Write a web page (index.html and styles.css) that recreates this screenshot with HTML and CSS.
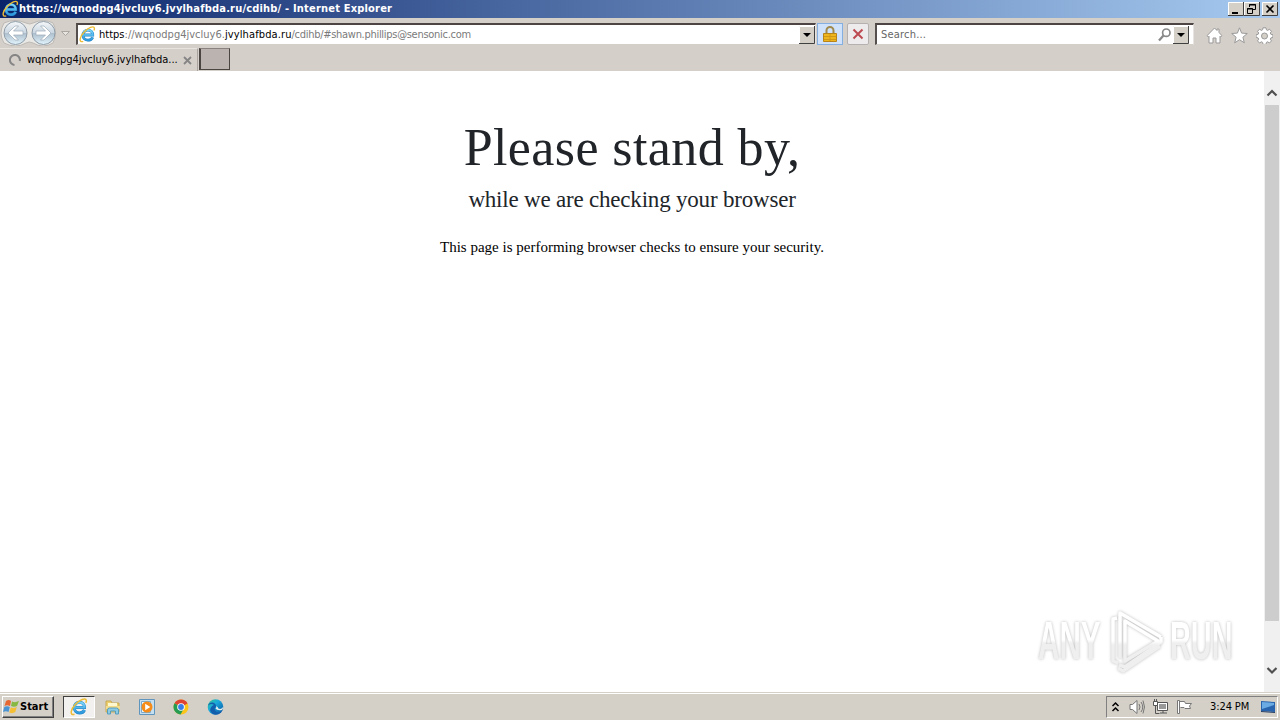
FILE: index.html
```html
<!DOCTYPE html>
<html lang="en">
<head>
<meta charset="utf-8">
<title>Internet Explorer</title>
<link rel="stylesheet" href="styles.css">
</head>
<body>
<svg class="defs" width="0" height="0">
  <defs>
    <linearGradient id="blue" x2="0" y2="1"><stop stop-color="#7bd6fa"/><stop offset="1" stop-color="#2c98dc"/></linearGradient>
    <linearGradient id="orb" x2="0" y2="1"><stop stop-color="#f5f8fa"/><stop offset=".48" stop-color="#cbd7e2"/><stop offset=".52" stop-color="#aebfce"/><stop offset="1" stop-color="#e2f4fc"/></linearGradient>
    <linearGradient id="edge" x2="1" y2="1"><stop stop-color="#38c987"/><stop offset=".4" stop-color="#1aa9dd"/><stop offset="1" stop-color="#0b4c9b"/></linearGradient>
    <linearGradient id="mark" gradientUnits="userSpaceOnUse" x1="0" y1="0" x2="0" y2="66"><stop stop-color="#fff"/><stop offset=".5" stop-color="#fff"/><stop offset=".56" stop-color="#efefef"/><stop offset="1" stop-color="#efefef"/></linearGradient>
    <symbol id="ie" viewBox="0 0 18 18">
      <path d="M14.500 12c-.9 1.900-2.700 3-5 3-3 0-5.200-2.200-5.200-5.300S6.500 4.300 9.500 4.300s5 2.200 5 5.200H5.500" fill="none" stroke="#2381c3" stroke-width="3"/>
      <path d="M14.500 12c-.9 1.900-2.700 3-5 3-3 0-5.200-2.200-5.200-5.300S6.500 4.300 9.500 4.300s5 2.200 5 5.200H5.500" fill="none" stroke="url(#blue)" stroke-width="2.200"/>
      <path d="M4.500 16.300C-.8 18 .8 11 5.500 6.300 9.500 2 15.500-.8 16.300 2.200c.2.800 0 1.600-.5 2.600" fill="none" stroke="#edbc36" stroke-width="1.500"/>
    </symbol>
  </defs>
</svg>
<header class="titlebar">
  <svg class="title-icon" width="17" height="18"><use href="#ie"/></svg>
  <span class="title-text">https://wqnodpg4jvcluy6.jvylhafbda.ru/cdihb/ - Internet Explorer</span>
  <div class="window-buttons">
    <svg width="16" height="14"><path class="face" d="M0 0h16v14H0z"/><path class="lit" d="M.5 13V.5H15"/><path class="dark" d="M0 13.500h15.500V0"/><path d="M4 10h6v2H4z"/></svg>
    <svg width="16" height="14"><path class="face" d="M0 0h16v14H0z"/><path class="lit" d="M.5 13V.5H15"/><path class="dark" d="M0 13.500h15.500V0"/><path d="M5.500 5V2.500h6v5H9M5 3h7M3.500 6.500h5v5h-5zM3 7h6" fill="none" stroke="#000"/></svg>
    <svg class="close" width="16" height="14"><path class="face" d="M0 0h16v14H0z"/><path class="lit" d="M.5 13V.5H15"/><path class="dark" d="M0 13.500h15.500V0"/><path d="M4.500 3.500l7 7M11.500 3.500l-7 7" stroke="#000" stroke-width="1.600"/></svg>
  </div>
</header>
<nav class="navbar">
  <svg class="travel" width="76" height="26" viewBox="0 0 76 26">
    <path d="M4 3Q15-2 26 3q4 2 7 0Q44-2 53 3q5 9 0 20-10 6-20 0-4-2-7 0-10 6-22 0-6-10 0-20z" fill="#eae8e5" stroke="#bdb9b5"/>
    <g fill="url(#orb)" stroke="#8f9da9"><circle cx="15.500" cy="13" r="11.500"/><circle cx="43.500" cy="13" r="11.500"/></g>
    <path d="M8 13l7-7h3.500l-5 5H23v4h-9.500l5 5H15z" fill="#fff" stroke="#9baab8" stroke-width=".7"/>
    <path d="M51 13l-7-7h-3.500l5 5H36v4h9.500l-5 5H44z" fill="#fff" stroke="#9baab8" stroke-width=".7"/>
    <path d="M61.500 11.500h8l-4 4z" fill="#e8e5e1" stroke="#aaa6a1"/>
  </svg>
  <div class="field address">
    <svg class="address-icon" width="17" height="17"><use href="#ie"/></svg>
    <span class="url"><b>https</b>://wqnodpg4jvcluy6.<b class="domain">jvylhafbda.ru</b><span class="path">/cdihb/#shawn.phillips@sensonic.com</span></span>
    <svg class="drop" width="16" height="18"><path class="face" d="M0 0h16v18H0z"/><path class="lit" d="M.5 17V.5H15"/><path class="dark" d="M0 17.500h15.500V0"/><path d="M4 7h8l-4 4z"/></svg>
  </div>
  <div class="lock"><svg width="14" height="17"><path d="M3.500 8V4.500a3.500 3.500 0 0 1 7 0V8" fill="none" stroke="#a08a4e" stroke-width="2"/><path d="M.5 7.500h13v8H.5z" fill="#efb51d" stroke="#b78419"/><path d="M1 10.500h12M1 13.500h12M7 8v7" stroke="#cf9817"/></svg></div>
  <div class="stop"><svg width="12" height="12"><path d="M1.500 1.500l9 9M10.500 1.500l-9 9" stroke="#bd4a50" stroke-width="2"/></svg></div>
  <div class="field search">
    <span class="placeholder">Search...</span>
    <svg class="lens" width="13" height="14"><circle cx="8.300" cy="4.700" r="3.700" fill="none" stroke="#888" stroke-width="1.700"/><path d="M5.500 7.500L1 12.500" stroke="#888" stroke-width="2.300"/></svg>
    <svg class="drop" width="16" height="18"><path class="face" d="M0 0h16v18H0z"/><path class="lit" d="M.5 17V.5H15"/><path class="dark" d="M0 17.500h15.500V0"/><path d="M4 7h8l-4 4z"/></svg>
  </div>
  <div class="tools">
    <svg width="17" height="17"><path d="M1 8.700L8.500 1l2.500 2.500V2h2v3.500L16 8.700l-1.300 1.200-.7-.7V16h-4v-5H7v5H3V9.200l-.7.700z" fill="#fff" stroke="#999"/></svg>
    <svg width="17" height="17"><path d="M8.500.8l2.100 5.300 5.700.4-4.400 3.700 1.400 5.600-4.800-3.100-4.800 3.100 1.400-5.600L.7 6.500l5.700-.4z" fill="#fff" stroke="#999"/></svg>
    <svg width="17" height="17"><path d="M7 .8h3l.4 2 1.300.6 1.700-1.200 2.100 2.100-1.200 1.700.6 1.300 2 .4v2.800l-2 .4-.6 1.300 1.200 1.700-2.100 2.100-1.700-1.200-1.300.6-.4 2H7l-.4-2-1.300-.6L3.600 16l-2.100-2.100 1.200-1.700-.6-1.300-2-.4V7.700l2-.4.600-1.300-1.200-1.700 2.100-2.100 1.700 1.200 1.300-.6z" fill="#fff" stroke="#999"/><circle cx="8.500" cy="9" r="3" fill="#d4d0c8" stroke="#999"/></svg>
  </div>
</nav>
<div class="tabs">
  <div class="tab">
    <svg width="14" height="14"><path d="M6.500 12A5 5 0 1 1 11.800 8" fill="none" stroke="#858585" stroke-width="2"/></svg>
    <span class="tab-text">wqnodpg4jvcluy6.jvylhafbda...</span>
    <svg class="tab-close" width="9" height="9"><path d="M1 1l7 7M8 1L1 8" stroke="#858585" stroke-width="1.800"/></svg>
  </div>
  <div class="new-tab"></div>
</div>
<div class="viewport">
  <main class="page">
    <h1>Please stand by,</h1>
    <h2>while we are checking your browser</h2>
    <p>This page is performing browser checks to ensure your security.</p>
  </main>
  <div class="scrollbar">
    <svg width="16" height="16"><path d="M3.500 10.500L8 6l4.500 4.500" fill="none" stroke="#505050" stroke-width="2.200"/></svg>
    <div class="thumb"></div>
    <svg class="down" width="16" height="16"><path d="M3.500 6L8 10.500l4.500-4.500" fill="none" stroke="#505050" stroke-width="2.200"/></svg>
  </div>
  <div class="watermark">
    <span class="any">ANY</span>
    <svg width="62" height="66" viewBox="0 0 62 66"><g fill="none" stroke="url(#mark)" stroke-width="3.500" stroke-linejoin="round"><path d="M15 50V5l41 24"/><path d="M12 10l-4 1v42l5 2"/><path d="M20 13l33 20-33 20z"/><path d="M56 29v5L20 59l-6-2"/><path d="M13 60l5 3 37-25"/></g></svg>
    <span class="run">RUN</span>
  </div>
</div>
<footer class="taskbar">
  <div class="start">
    <svg width="17" height="16"><path d="M3 2q3-2 5 0L7 7Q4 5.500 1.500 7z" fill="#e66731"/><path d="M9 2.500q3 1.500 7-.5l-2 5q-3 1.500-6 0z" fill="#86b843"/><path d="M1.300 8Q4 6.500 6.800 8L5.500 13Q3 11.500 0 13z" fill="#4a94d3"/><path d="M7.800 8.500q3 1 6-.5l-1.500 5q-3 2-6 .5z" fill="#f4bf35"/></svg>
    <span>Start</span>
  </div>
  <div class="task active"><svg width="18" height="18"><use href="#ie"/></svg></div>
  <div class="task"><svg width="16" height="16"><path d="M1 2h5l1 2h7v9H1z" fill="#edcf6b" stroke="#c6a957"/><path d="M3 4h9v3H3z" fill="#fff8cf"/><path d="M1 7h14v3H1z" fill="#f3dd8d"/><path d="M2.500 15v-4q0-2 2-2h7q2 0 2 2v4h-3v-3h-5v3z" fill="#8dcbe5" stroke="#559dbd"/></svg></div>
  <div class="task"><svg width="16" height="16"><path d="M.5.5h15v15H.5z" fill="#c6dff0" stroke="#6095be"/><path d="M2.500 2.500h9v11h-9z" fill="#eef6fa" stroke="#79a9cb"/><circle cx="8" cy="8" r="5.500" fill="#f58b18"/><path d="M6.200 4.800v6.400L11.300 8z" fill="#fff"/></svg></div>
  <div class="task"><svg width="16" height="16"><circle cx="8" cy="8" r="7.500" fill="#fbc51c"/><path d="M8 8L1.500 4.200A7.500 7.500 0 0 1 14.500 4.200z" fill="#df4334"/><path d="M8 8L1.500 4.200A7.500 7.500 0 0 0 7.500 15.500L11 9.500z" fill="#269b52"/><path d="M8 4.200h6.500L8 8z" fill="#df4334"/><circle cx="8" cy="8" r="3.800" fill="#fff"/><circle cx="8" cy="8" r="2.900" fill="#397ee8"/></svg></div>
  <div class="task"><svg width="17" height="16"><circle cx="8.500" cy="8" r="7.800" fill="url(#edge)"/><path d="M1 7C2 2 9 3 9 7c0 2-2 2-1 4 1 3 5 3 7 1-2 4-8 5-11 1C2 11 4 7 7 6 5 4 2 5 1 7z" fill="#125eac"/><path d="M9 7q1 1-.5 2.500Q10 12 15 11q1.500-2 1.300-3.500-1 3-4.300 2.300-1.500-.3-1-1.300Z" fill="#e3eeee"/></svg></div>
  <div class="tray">
    <svg width="9" height="12"><path d="M1.500 5l3-3 3 3M1.500 10l3-3 3 3" fill="none" stroke="#000" stroke-width="1.500"/></svg>
    <svg class="sound" width="16" height="16"><path d="M1 5.500h2.500L8 1.500v13l-4.500-4H1z" fill="#fff" stroke="#777"/><path d="M10 5q2 3 0 6M12 3q3.500 5 0 10M14 1.500q3 6.500 0 13" fill="none" stroke="#777"/></svg>
    <svg class="net" width="17" height="16"><path d="M5.500 3.500h10v8h-10z" fill="#fff" stroke="#555"/><path d="M7 5h7v5H7z" fill="#999"/><path d="M8 14h7M11 11v3M3.500 7v7.500h4" fill="none" stroke="#555"/><path d="M1.500 2.500h4v4h-4zM2.500 2V0M4.500 2V0" fill="#fff" stroke="#555"/></svg>
    <svg class="flag" width="17" height="16"><path d="M2.500 2.500h6l1 2h6l-2 2.500 1 2.500H9l-1-1H4.500" fill="#fff" stroke="#777"/><path d="M1.500 1.500h2v13h-2z" fill="#fff" stroke="#777"/></svg>
    <time>3:24 PM</time>
    <svg class="desktop" width="16" height="14"><path d="M1 1l14 1v10l-14-1z" fill="#2864ae"/><path d="M2 2l12 1v2L2 9z" fill="#6aabe4"/><path d="M1 11.500l14 1" stroke="#263d63"/></svg>
  </div>
</footer>
</body>
</html>
```
FILE: styles.css
```css
* { box-sizing: border-box; }
body { margin: 0; width: 1280px; height: 720px; overflow: hidden; display: flex; flex-direction: column; background: #d4d0c8; font: 11px/14px "DejaVu Sans Condensed", "DejaVu Sans", sans-serif; color: #000; }
svg { display: block; flex: none; }
.defs { position: absolute; }
.face { fill: #d4d0c8; }
.lit { stroke: #fff; fill: none; }
.dark { stroke: #404040; fill: none; }
.titlebar { height: 18px; flex: none; display: flex; align-items: center; padding: 0 2px; background: linear-gradient(90deg, #0a246a, #a6caf0); color: #fff; }
.title-text { font-weight: bold; white-space: nowrap; letter-spacing: .19px; }
.window-buttons { display: flex; margin-left: auto; }
.close { margin-left: 2px; }
.navbar { height: 30px; flex: none; display: flex; align-items: flex-start; padding-top: 4px; background: #d5cfca; border-top: 1px solid #d4d0c8; }
.travel { margin-top: -3px; }
.field { height: 22px; background: #fff; border-style: solid; border-width: 2px 1px 1px 2px; border-color: #4d4543 #e8e4e1 #d4d0c8 #55504e; display: flex; align-items: center; white-space: nowrap; }
.address { width: 740px; }
.address-icon { margin-left: 1px; }
.url { margin-left: 3px; color: #7a7a7a; letter-spacing: .01px; }
.url b { font-weight: normal; color: #000; }
.url .domain { letter-spacing: .11px; }
.path { letter-spacing: -.29px; }
.drop { margin-left: auto; }
.lock { width: 26px; height: 22px; margin-left: 1px; border: 1px solid #85afe0; background: #cfe2fa; display: grid; place-items: center; }
.stop { width: 22px; height: 22px; margin-left: 4px; border: 1px solid #b5b1b0; border-radius: 2px; background: #eeebec; display: grid; place-items: center; }
.search { width: 319px; margin-left: 6px; }
.placeholder { margin-left: 4px; color: #666; letter-spacing: .2px; }
.lens { margin-left: auto; }
.search .drop { margin: 0 4px 0 2px; }
.tools { display: flex; gap: 8px; margin: 4px 0 0 12px; }
.tabs { height: 23px; flex: none; display: flex; background: #d5cfca; }
.tab { width: 198px; display: flex; align-items: center; padding-left: 8px; border-top: 1px solid #e7e3df; border-right: 1px solid #aaa39f; }
.tab-text { width: 152px; margin-left: 5px; white-space: nowrap; letter-spacing: -.02px; }
.tab-close { margin-left: 4px; }
.new-tab { width: 31px; height: 22px; margin-left: 1px; border: 1px solid #4b4542; border-left-width: 2px; border-top-color: #8a827e; background: #bbb3af; }
.viewport { height: 621px; flex: none; display: flex; position: relative; background: #fff; }
.page { width: 1264px; text-align: center; font-family: "Liberation Serif", serif; color: #212529; }
h1 { margin: 45px 0 0; font-size: 52px; letter-spacing: .4px; line-height: 63px; font-weight: normal; }
h2 { margin: 7px 0 0; font-size: 23px; letter-spacing: -.2px; line-height: 28px; font-weight: normal; }
p { margin: 24px 0 0; font-size: 15px; line-height: 18px; color: #000; }
.scrollbar { width: 16px; padding: 14px 0; display: flex; flex-direction: column; background: #f0f0f0; }
.thumb { height: 516px; margin: 4px 1px 0; background: #cdcdcd; }
.down { margin-top: auto; }
.watermark { position: absolute; left: 1038px; top: 537px; display: flex; align-items: center; font: bold 53px/52px "Liberation Sans", sans-serif; color: transparent; filter: drop-shadow(0 0 1.5px #bbb); }
.watermark svg { margin: 0 3px 0 1px; }
.any, .run { transform-origin: left; background: linear-gradient(#fff 48%, #efefef 54%); background-clip: text; -webkit-background-clip: text; }
.any { width: 114px; margin-right: -48px; transform: scaleX(.56); }
.run { width: 116px; margin-right: -53px; transform: scaleX(.545); }
.taskbar { height: 28px; flex: none; padding: 3px 2px 1px; display: flex; border-top: 1px solid #d4d0c8; box-shadow: inset 0 1px #fff; background: #d4d0c8; }
.start { width: 52px; height: 22px; display: flex; align-items: center; border: 1px solid; border-color: #fff #404040 #404040 #fff; box-shadow: inset -1px -1px #808080; font-weight: bold; }
.task { width: 34px; height: 22px; display: grid; place-items: center; }
.active { width: 32px; margin: 0 1px 0 9px; background: #f2f1ef; border: 1px solid; border-color: #404040 #fff #fff #404040; }
.tray { width: 172px; height: 22px; margin-left: auto; display: flex; align-items: center; padding-left: 4px; border: 1px solid; border-color: #808080 #fff #fff #808080; }
.sound { margin-left: 9px; }
.net { margin-left: 7px; }
.flag { margin-left: 7px; }
time { width: 42px; margin-left: 17px; white-space: nowrap; letter-spacing: -.1px; }
.desktop { margin-left: 8px; }
```
